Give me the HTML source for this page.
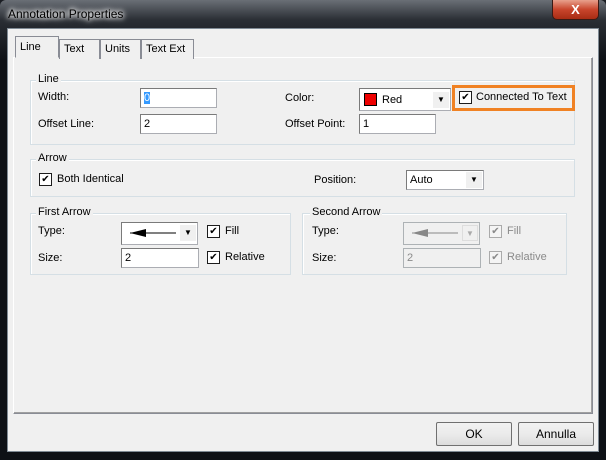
<!DOCTYPE html>
<html><head><style>
*{box-sizing:border-box}
body{margin:0;width:606px;height:460px;overflow:hidden;background:#1a1d22;font-family:"Liberation Sans",sans-serif;font-size:11px;color:#000;white-space:nowrap}
.a{position:absolute}
#frame{left:0;top:0;width:606px;height:460px;background:linear-gradient(#6a6f76,#2a2e34 20px,#0e1116 60px,#0e1116);border-radius:6px 6px 0 0}
#title{left:8px;top:7px;color:#000;font-size:12px;text-shadow:0 0 8px #fff,0 0 6px #fff,0 0 4px #fff;}
#close{left:552px;top:0;width:47px;height:20px;border:1px solid #3a1a14;border-top:none;border-radius:0 0 5px 5px;background:linear-gradient(#e8a08c,#c8452c 50%,#a82c14);color:#fff;font-weight:bold;font-size:13px;text-align:center;line-height:19px}
#client{left:7px;top:28px;width:592px;height:424px;background:#f0f0f0;border:1px solid #7f8a94}
.tab{height:20px;border:1px solid #898c95;border-bottom:none;background:#f0f0f0;padding:3px 4px 0}
.panel{left:13px;top:57px;width:580px;height:357px;border:1px solid #898c95;border-top-color:#fff;border-left-color:#fff;box-shadow:inset -1px -1px 0 #a0a0a0}
.grp{border:1px solid #d5dfe5;box-shadow:inset 1px 1px 0 #fff}
.leg{background:#f0f0f0;padding:0 2px;}
.in{background:#fff;border:1px solid #abadb3;border-top-color:#7a7a7a;border-left-color:#7a7a7a;height:20px;padding:3px 3px;}
.cb{width:13px;height:13px;border:1px solid #1c1c1c;background:#fff;font-size:10px;line-height:11px;text-align:center}
.dd{width:16px;height:16px;background:#f0f0f0;border:1px solid #ddd;font-size:8px;text-align:center;line-height:16px}
.btn{height:24px;border:1px solid #707070;border-radius:2px;background:linear-gradient(#f2f2f2,#ebebeb 50%,#dcdcdc);text-align:center;line-height:22px;font-size:12px}
.g{color:#8a8a8a}
</style></head><body>
<div class="a" id="frame"></div>
<div class="a" id="title">Annotation Properties</div>
<div class="a" id="close">X</div>
<div class="a" id="client"></div>
<div class="a panel"></div>
<div class="a tab" style="left:15px;top:36px;width:44px;height:22px;border-bottom:1px solid #f0f0f0;z-index:2;padding-top:4px">Line</div>
<div class="a tab" style="left:59px;top:39px;width:41px">Text</div>
<div class="a tab" style="left:100px;top:39px;width:41px">Units</div>
<div class="a tab" style="left:141px;top:39px;width:53px">Text Ext</div>

<div class="a grp" style="left:30px;top:80px;width:545px;height:65px"></div>
<div class="a leg" style="left:36px;top:73px">Line</div>
<div class="a" style="left:38px;top:91px">Width:</div>
<div class="a in" style="left:140px;top:88px;width:77px"><span style="background:#3399ff;color:#fff">0</span></div>
<div class="a" style="left:38px;top:118px">Offset Line:</div>
<div class="a in" style="left:140px;top:114px;width:77px">2</div>
<div class="a" style="left:285px;top:92px">Color:</div>
<div class="a in" style="left:359px;top:88px;width:92px;height:23px;padding:0"><div class="a" style="left:4px;top:4px;width:13px;height:13px;background:#e00;border:1px solid #000"></div><span class="a" style="left:22px;top:5px">Red</span><div class="a dd" style="left:73px;top:3px;border:none">▼</div></div>
<div class="a" style="left:452px;top:85px;width:123px;height:26px;border:3px solid #f08224"></div>
<div class="a cb" style="left:459px;top:91px">✔</div>
<div class="a" style="left:476px;top:91px">Connected To Text</div>
<div class="a" style="left:285px;top:118px">Offset Point:</div>
<div class="a in" style="left:359px;top:114px;width:77px">1</div>

<div class="a grp" style="left:30px;top:159px;width:545px;height:38px"></div>
<div class="a leg" style="left:36px;top:152px">Arrow</div>
<div class="a cb" style="left:39px;top:173px">✔</div>
<div class="a" style="left:57px;top:173px">Both Identical</div>
<div class="a" style="left:314px;top:174px">Position:</div>
<div class="a in" style="left:406px;top:170px;width:78px">Auto<div class="a dd" style="left:59px;top:1px;border:none">▼</div></div>

<div class="a grp" style="left:30px;top:213px;width:261px;height:62px"></div>
<div class="a leg" style="left:36px;top:206px">First Arrow</div>
<div class="a" style="left:38px;top:225px">Type:</div>
<div class="a in" style="left:121px;top:222px;width:77px;height:23px"><svg class="a" style="left:4px;top:5px" width="52" height="10"><path d="M4 5H50" stroke="#000"/><path d="M4 5L20 1V9Z" fill="#000"/></svg><div class="a dd" style="left:58px;top:2px;border:none">▼</div></div>
<div class="a cb" style="left:207px;top:225px">✔</div>
<div class="a" style="left:225px;top:225px">Fill</div>
<div class="a" style="left:38px;top:252px">Size:</div>
<div class="a in" style="left:121px;top:248px;width:78px">2</div>
<div class="a cb" style="left:207px;top:251px">✔</div>
<div class="a" style="left:225px;top:251px">Relative</div>

<div class="a grp" style="left:302px;top:213px;width:265px;height:62px"></div>
<div class="a leg" style="left:310px;top:206px">Second Arrow</div>
<div class="a" style="left:312px;top:225px">Type:</div>
<div class="a in" style="left:403px;top:222px;width:77px;height:23px;background:#f0f0f0;border-color:#adb2b5"><svg class="a" style="left:4px;top:5px" width="52" height="10"><path d="M4 5H50" stroke="#888"/><path d="M4 5L20 1V9Z" fill="#888"/></svg><div class="a dd" style="left:58px;top:2px;color:#aaa">▼</div></div>
<div class="a cb g" style="left:489px;top:225px;border-color:#aaa;background:#f4f4f4">✔</div>
<div class="a g" style="left:507px;top:225px">Fill</div>
<div class="a" style="left:312px;top:252px">Size:</div>
<div class="a in g" style="left:403px;top:248px;width:78px;background:#f0f0f0;border-color:#adb2b5">2</div>
<div class="a cb g" style="left:489px;top:251px;border-color:#aaa;background:#f4f4f4">✔</div>
<div class="a g" style="left:507px;top:251px">Relative</div>

<div class="a btn" style="left:436px;top:422px;width:76px">OK</div>
<div class="a btn" style="left:518px;top:422px;width:76px">Annulla</div>
</body></html>
